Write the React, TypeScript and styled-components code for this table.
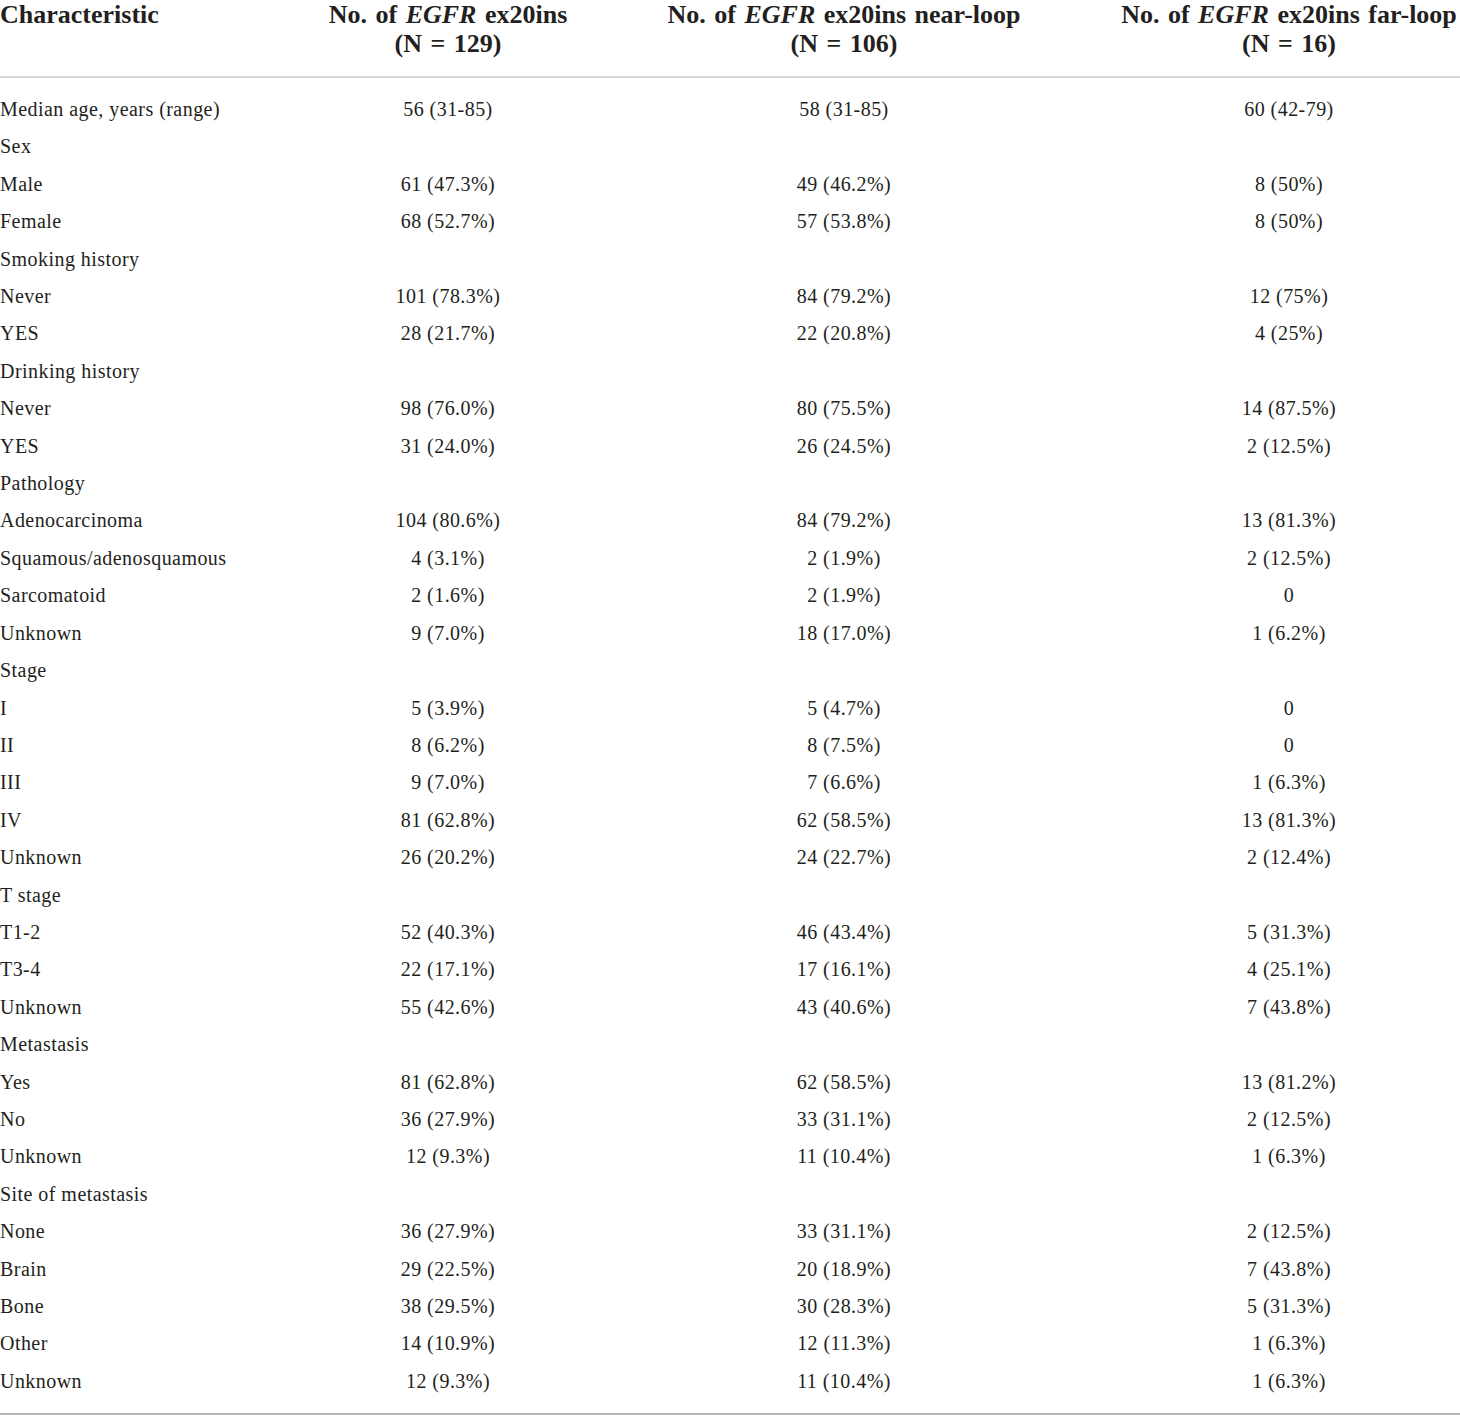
import React from "react";
import styled, { createGlobalStyle } from "styled-components";

const Global = createGlobalStyle`
  html, body { margin: 0; padding: 0; background: #ffffff; }
  body { font-family: "Liberation Serif", "Times New Roman", serif; color: #231f20; }
`;

const Table = styled.table`
  width: 1460px;
  table-layout: fixed;
  border-collapse: collapse;
  font-family: "Liberation Serif", "Times New Roman", serif;
  color: #231f20;
`;

const HeadCell = styled.th<{ $left?: boolean }>`
  font-size: 26px;
  font-weight: 700;
  line-height: 29px;
  word-spacing: 2px;
  padding: 0 0 18px 0;
  text-align: ${(p) => (p.$left ? "left" : "center")};
  vertical-align: top;
  white-space: nowrap;
  border-bottom: 2px solid #d6d6d6;
`;

const Body = styled.tbody`
  tr:first-child td { padding-top: 13px; }
  tr:last-child td { padding-bottom: 13px; border-bottom: 2px solid #b4b4b4; }
`;

const Cell = styled.td<{ $left?: boolean }>`
  font-size: 20px;
  letter-spacing: 0.45px;
  line-height: 37.4px;
  padding: 0;
  text-align: ${(p) => (p.$left ? "left" : "center")};
  white-space: nowrap;
`;

const rows: [string, string, string, string][] = [
  ["Median age, years (range)", "56 (31-85)", "58 (31-85)", "60 (42-79)"],
  ["Sex", "", "", ""],
  ["Male", "61 (47.3%)", "49 (46.2%)", "8 (50%)"],
  ["Female", "68 (52.7%)", "57 (53.8%)", "8 (50%)"],
  ["Smoking history", "", "", ""],
  ["Never", "101 (78.3%)", "84 (79.2%)", "12 (75%)"],
  ["YES", "28 (21.7%)", "22 (20.8%)", "4 (25%)"],
  ["Drinking history", "", "", ""],
  ["Never", "98 (76.0%)", "80 (75.5%)", "14 (87.5%)"],
  ["YES", "31 (24.0%)", "26 (24.5%)", "2 (12.5%)"],
  ["Pathology", "", "", ""],
  ["Adenocarcinoma", "104 (80.6%)", "84 (79.2%)", "13 (81.3%)"],
  ["Squamous/adenosquamous", "4 (3.1%)", "2 (1.9%)", "2 (12.5%)"],
  ["Sarcomatoid", "2 (1.6%)", "2 (1.9%)", "0"],
  ["Unknown", "9 (7.0%)", "18 (17.0%)", "1 (6.2%)"],
  ["Stage", "", "", ""],
  ["I", "5 (3.9%)", "5 (4.7%)", "0"],
  ["II", "8 (6.2%)", "8 (7.5%)", "0"],
  ["III", "9 (7.0%)", "7 (6.6%)", "1 (6.3%)"],
  ["IV", "81 (62.8%)", "62 (58.5%)", "13 (81.3%)"],
  ["Unknown", "26 (20.2%)", "24 (22.7%)", "2 (12.4%)"],
  ["T stage", "", "", ""],
  ["T1-2", "52 (40.3%)", "46 (43.4%)", "5 (31.3%)"],
  ["T3-4", "22 (17.1%)", "17 (16.1%)", "4 (25.1%)"],
  ["Unknown", "55 (42.6%)", "43 (40.6%)", "7 (43.8%)"],
  ["Metastasis", "", "", ""],
  ["Yes", "81 (62.8%)", "62 (58.5%)", "13 (81.2%)"],
  ["No", "36 (27.9%)", "33 (31.1%)", "2 (12.5%)"],
  ["Unknown", "12 (9.3%)", "11 (10.4%)", "1 (6.3%)"],
  ["Site of metastasis", "", "", ""],
  ["None", "36 (27.9%)", "33 (31.1%)", "2 (12.5%)"],
  ["Brain", "29 (22.5%)", "20 (18.9%)", "7 (43.8%)"],
  ["Bone", "38 (29.5%)", "30 (28.3%)", "5 (31.3%)"],
  ["Other", "14 (10.9%)", "12 (11.3%)", "1 (6.3%)"],
  ["Unknown", "12 (9.3%)", "11 (10.4%)", "1 (6.3%)"],
];

const headers: [string, string][] = [
  ["ex20ins", "(N = 129)"],
  ["ex20ins near-loop", "(N = 106)"],
  ["ex20ins far-loop", "(N = 16)"],
];

export default function App() {
  return (
    <>
      <Global />
      <Table>
        <colgroup>
          <col style={{ width: 326 }} />
          <col style={{ width: 244 }} />
          <col style={{ width: 548 }} />
          <col style={{ width: 342 }} />
        </colgroup>
        <thead>
          <tr>
            <HeadCell $left>Characteristic</HeadCell>
            {headers.map(([a, b]) => (
              <HeadCell key={b}>
                No. of <i>EGFR</i> {a}
                <br />
                {b}
              </HeadCell>
            ))}
          </tr>
        </thead>
        <Body>
          {rows.map((r, i) => (
            <tr key={i}>
              <Cell $left>{r[0]}</Cell>
              <Cell>{r[1]}</Cell>
              <Cell>{r[2]}</Cell>
              <Cell>{r[3]}</Cell>
            </tr>
          ))}
        </Body>
      </Table>
    </>
  );
}
